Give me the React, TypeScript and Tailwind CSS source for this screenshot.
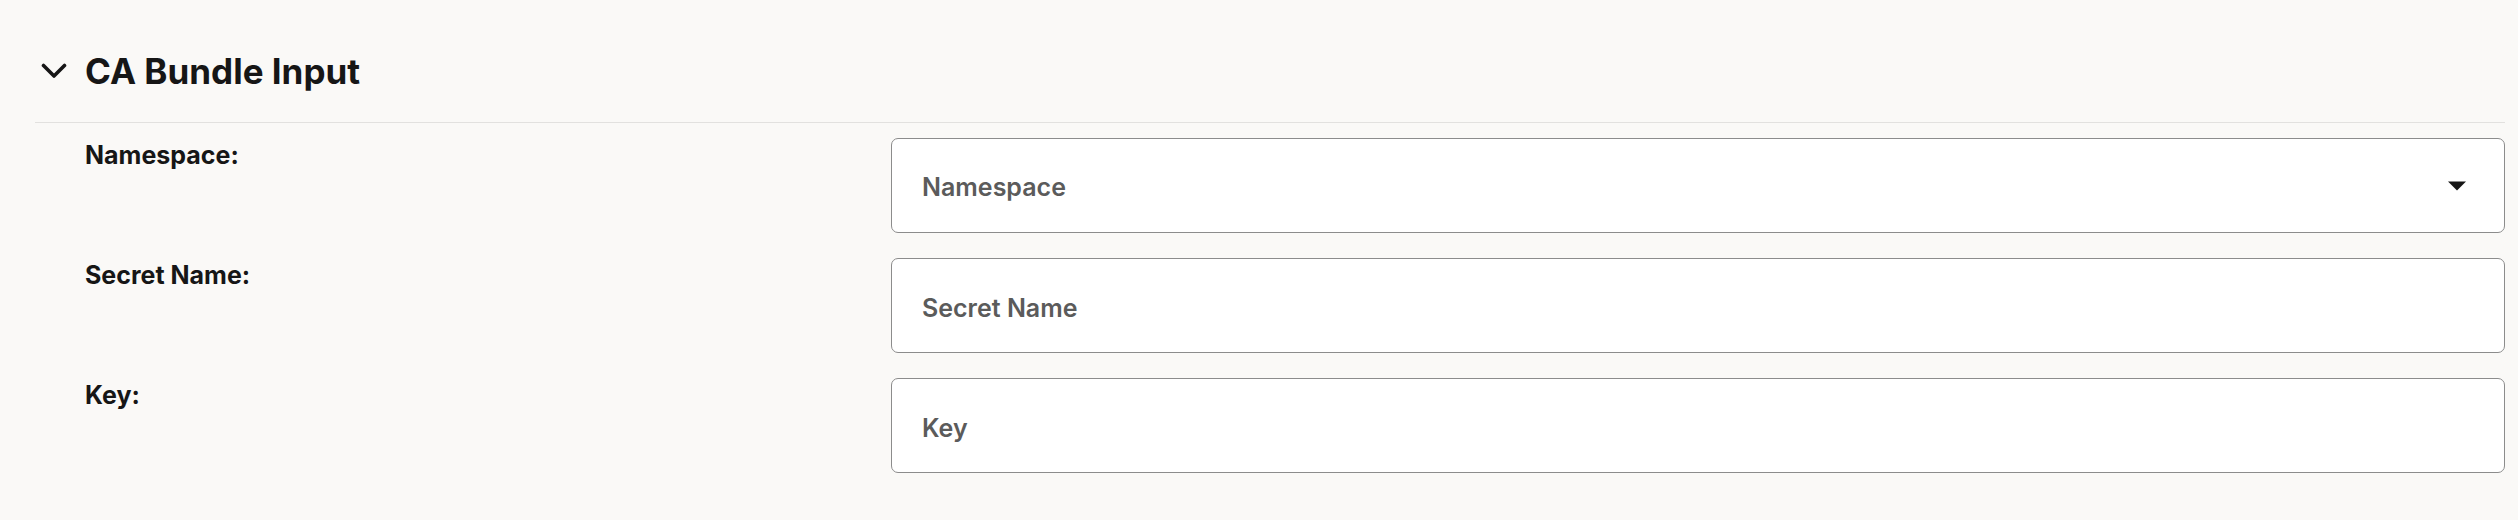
import { useState } from "react";

function Chevron() {
  return (
    <svg width="26" height="16" viewBox="0 0 26 16" fill="none" className="shrink-0">
      <polyline
        points="2.5,2.5 13,13 23.5,2.5"
        stroke="#161616"
        strokeWidth="3.6"
        strokeLinecap="round"
        strokeLinejoin="round"
      />
    </svg>
  );
}

function Caret() {
  return (
    <svg width="18" height="10" viewBox="0 0 18 10" className="shrink-0">
      <polygon points="0,0.5 18,0.5 9,9.5" fill="#161616" />
    </svg>
  );
}

function Row({ label, children }: { label: string; children: React.ReactNode }) {
  return (
    <div className="flex">
      <div className="w-[806px] shrink-0 pt-[1px] text-[25px] leading-[32px] font-bold text-[#161616]">
        {label}
      </div>
      <div className="flex-1 min-w-0">{children}</div>
    </div>
  );
}

const boxClass =
  "h-[95px] w-full rounded-[7px] border border-[#8c8c8c] bg-white pl-[30px] pr-[38px] pt-[5px] text-[25px] font-semibold text-[#161616] placeholder:text-[#5b5b5b] outline-none";

export default function App() {
  const [open, setOpen] = useState(true);
  const [secret, setSecret] = useState("");
  const [key, setKey] = useState("");

  return (
    <div className="min-h-[520px] w-full bg-[#faf9f7] pl-[35px] pr-[13px] font-['Inter',sans-serif] antialiased">
      {/* Header */}
      <button
        type="button"
        onClick={() => setOpen(!open)}
        className="flex w-full items-center border-b border-[#e2e1df] pt-[49px] pb-[29px] text-left"
      >
        <span className="ml-[6px] mr-[18px] flex">
          <Chevron />
        </span>
        <h1 className="text-[35px] leading-[44px] font-bold text-[#161616]">
          CA Bundle Input
        </h1>
      </button>

      {open && (
        <div className="flex flex-col gap-[25px] pt-[15px] pl-[50px]">
          <Row label="Namespace:">
            <div className="flex h-[95px] w-full cursor-pointer items-center justify-between rounded-[7px] border border-[#8c8c8c] bg-white pl-[30px] pr-[38px]">
              <span className="pt-[5px] text-[25px] font-semibold text-[#5b5b5b]">Namespace</span>
              <Caret />
            </div>
          </Row>
          <Row label="Secret Name:">
            <input
              className={boxClass}
              placeholder="Secret Name"
              value={secret}
              onChange={(e) => setSecret(e.target.value)}
            />
          </Row>
          <Row label="Key:">
            <input
              className={boxClass}
              placeholder="Key"
              value={key}
              onChange={(e) => setKey(e.target.value)}
            />
          </Row>
        </div>
      )}
    </div>
  );
}
